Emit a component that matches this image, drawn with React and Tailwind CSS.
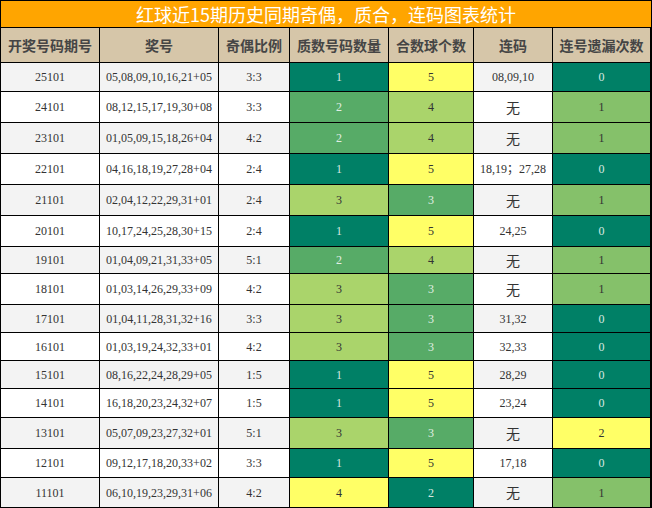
const rows = [
  ["25101", "05,08,09,10,16,21+05", "3:3", 1, 5, "08,09,10", 0, "h-[28px]"],
  ["24101", "08,12,15,17,19,30+08", "3:3", 2, 4, "无", 1, "h-[30px]"],
  ["23101", "01,05,09,15,18,26+04", "4:2", 2, 4, "无", 1, "h-[30px]"],
  ["22101", "04,16,18,19,27,28+04", "2:4", 1, 5, "18,19；27,28", 0, "h-[30px]"],
  ["21101", "02,04,12,22,29,31+01", "2:4", 3, 3, "无", 1, "h-[30px]"],
  ["20101", "10,17,24,25,28,30+15", "2:4", 1, 5, "24,25", 0, "h-[30px]"],
  ["19101", "01,04,09,21,31,33+05", "5:1", 2, 4, "无", 1, "h-[26px]"],
  ["18101", "01,03,14,26,29,33+09", "4:2", 3, 3, "无", 1, "h-[30px]"],
  ["17101", "01,04,11,28,31,32+16", "3:3", 3, 3, "31,32", 0, "h-[27px]"],
  ["16101", "01,03,19,24,32,33+01", "4:2", 3, 3, "32,33", 0, "h-[27px]"],
  ["15101", "08,16,22,24,28,29+05", "1:5", 1, 5, "28,29", 0, "h-[27px]"],
  ["14101", "16,18,20,23,24,32+07", "1:5", 1, 5, "23,24", 0, "h-[28px]"],
  ["13101", "05,07,09,23,27,32+01", "5:1", 3, 3, "无", 2, "h-[30px]"],
  ["12101", "09,12,17,18,20,33+02", "3:3", 1, 5, "17,18", 0, "h-[28px]"],
  ["11101", "06,10,19,23,29,31+06", "4:2", 4, 2, "无", 1, "h-[29px]"],
];

const headers = ["开奖号码期号", "奖号", "奇偶比例", "质数号码数量", "合数球个数", "连码", "连号遗漏次数"];

const DARK = "bg-[#008066] text-[#d8e8e0]";
const MID = "bg-[#57ab67] text-[#e0eee4]";
const LIGHT = "bg-[#aad46b] text-[#333333]";
const YELLOW = "bg-[#ffff66] text-[#333333]";

const primeColor = { 1: DARK, 2: MID, 3: LIGHT, 4: YELLOW };
const compColor = { 5: YELLOW, 4: LIGHT, 3: MID, 2: DARK };
const missColor = { 0: DARK, 1: "bg-[#85c16a] text-[#333333]", 2: YELLOW };

const cols = "grid grid-cols-[98px_118px_70px_98px_84px_78px_97px] gap-px";

export default function App() {
  return (
    <div className="w-[652px] h-[508px] bg-black p-px flex flex-col gap-px font-['Liberation_Serif','Noto_Sans_CJK_SC',serif] text-[12px] text-[#333333] overflow-hidden">
      <div className="h-[26px] bg-[#ffa500] flex items-center justify-center text-white text-[18px] font-['Noto_Sans_CJK_SC',sans-serif] leading-none">
        红球近15期历史同期奇偶，质合，连码图表统计
      </div>
      <div className={`${cols} h-[34px]`}>
        {headers.map((h) => (
          <div
            key={h}
            className="bg-[#d6c6a9] flex items-center justify-center font-bold text-[14px] text-[#454545] font-['Noto_Sans_CJK_SC',sans-serif]"
          >
            {h}
          </div>
        ))}
      </div>
      {rows.map(([issue, nums, ratio, prime, comp, lian, miss, h], i) => {
        const bg = i % 2 === 0 ? "bg-[#f3f3f3]" : "bg-white";
        return (
          <div key={issue} className={`${cols} ${h}`}>
            <div className={`${bg} flex items-center justify-center`}>{issue}</div>
            <div className={`${bg} flex items-center justify-center`}>{nums}</div>
            <div className={`${bg} flex items-center justify-center`}>{ratio}</div>
            <div className={`${primeColor[prime]} flex items-center justify-center`}>{prime}</div>
            <div className={`${compColor[comp]} flex items-center justify-center`}>{comp}</div>
            <div
              className={`${bg} flex items-center justify-center ${
                lian === "无" ? "text-[14px] font-['Noto_Sans_CJK_SC',sans-serif]" : ""
              }`}
            >
              {lian}
            </div>
            <div className={`${missColor[miss]} flex items-center justify-center`}>{miss}</div>
          </div>
        );
      })}
    </div>
  );
}
